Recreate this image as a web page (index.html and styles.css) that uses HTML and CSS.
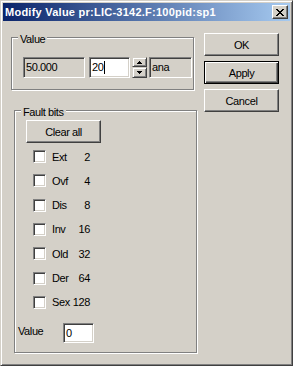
FILE: index.html
```html
<!DOCTYPE html>
<html lang="en">
<head>
    <meta charset="UTF-8">
    <title>Modify Value</title>
    <link rel="stylesheet" href="styles.css">
</head>
<body>
    <div class="window">
        <div class="titlebar">
            <span class="title">Modify Value pr:LIC-3142.F:100pid:sp1</span>
            <span class="close">
                <svg width="8" height="7" viewBox="0 0 8 7" shape-rendering="crispEdges">
                    <path d="M0 0h2v1h-2z M6 0h2v1h-2z M1 1h2v1h-2z M5 1h2v1h-2z M2 2h4v1h-4z M3 3h2v1h-2z M2 4h4v1h-4z M1 5h2v1h-2z M5 5h2v1h-2z M0 6h2v1h-2z M6 6h2v1h-2z" fill="#000"/>
                </svg>
            </span>
        </div>

        <div class="client">
            <div class="left">
                <div class="group value-group">
                    <span class="legend">Value</span>
                    <div class="field-row">
                        <div class="field readonly current">50.000</div>
                        <div class="field edit entry">20<span class="caret"></span></div>
                        <div class="spin">
                            <span class="spin-btn">
                                <svg width="5" height="3" viewBox="0 0 5 3" shape-rendering="crispEdges"><path d="M2 0h1v1h1v1h1v1h-5v-1h1v-1h1z" fill="#000"/></svg>
                            </span>
                            <span class="spin-btn down">
                                <svg width="5" height="3" viewBox="0 0 5 3" shape-rendering="crispEdges"><path d="M0 0h5v1h-1v1h-1v1h-1v-1h-1v-1h-1z" fill="#000"/></svg>
                            </span>
                        </div>
                        <div class="field readonly unit">ana</div>
                    </div>
                </div>

                <div class="group fault-group">
                    <span class="legend">Fault bits</span>
                    <button class="btn clear">Clear all</button>
                    <ul class="bits">
                        <li><span class="check"></span><span class="bit-label"><span>Ext</span><span>2</span></span></li>
                        <li><span class="check"></span><span class="bit-label"><span>Ovf</span><span>4</span></span></li>
                        <li><span class="check"></span><span class="bit-label"><span>Dis</span><span>8</span></span></li>
                        <li><span class="check"></span><span class="bit-label"><span>Inv</span><span>16</span></span></li>
                        <li><span class="check"></span><span class="bit-label"><span>Old</span><span>32</span></span></li>
                        <li><span class="check"></span><span class="bit-label"><span>Der</span><span>64</span></span></li>
                        <li><span class="check"></span><span class="bit-label"><span>Sex</span><span>128</span></span></li>
                    </ul>
                    <div class="value-row">
                        <span class="value-label">Value</span>
                        <div class="field edit bits-value">0</div>
                    </div>
                </div>
            </div>

            <div class="buttons">
                <button class="btn">OK</button>
                <button class="btn default">Apply</button>
                <button class="btn">Cancel</button>
            </div>
        </div>
    </div>
</body>
</html>
```

FILE: styles.css
```css
* {
    box-sizing: border-box;
}

body {
    margin: 0;
    font-family: "Liberation Sans", Arial, sans-serif;
    font-size: 11px;
    letter-spacing: -0.4px;
    color: #000;
    background: #d4d0c8;
}

.window {
    width: 293px;
    height: 366px;
    background: #d4d0c8;
    border: 1px solid;
    border-color: #d4d0c8 #404040 #404040 #d4d0c8;
    box-shadow: inset 1px 1px #fff, inset -1px -1px #808080;
    padding: 2px;
}

/* Title bar */
.titlebar {
    height: 18px;
    background: linear-gradient(to right, #0a246a, #a6caf0);
    display: flex;
    align-items: center;
    justify-content: space-between;
    padding: 0 2px;
}

.title {
    color: #fff;
    font-weight: bold;
    letter-spacing: 0.25px;
}

.close {
    width: 16px;
    height: 14px;
    background: #d4d0c8;
    border: 1px solid;
    border-color: #fff #404040 #404040 #fff;
    box-shadow: inset -1px -1px #808080;
    display: flex;
    align-items: center;
    justify-content: center;
}

/* Client area */
.client {
    display: flex;
}

.left {
    width: 194px;
}

.group {
    position: relative;
    border: 1px solid #808080;
    box-shadow: inset 1px 1px #fff, 1px 1px #fff;
}

.legend {
    position: absolute;
    top: -5px;
    left: 6px;
    padding: 0 2px;
    line-height: 13px;
    background: #d4d0c8;
}

.value-group {
    margin: 16px 0 0 8px;
    width: 183px;
    height: 53px;
    padding: 19px 0 0 11px;
}

.field-row {
    display: flex;
}

.field {
    height: 21px;
    border: 1px solid;
    border-color: #808080 #fff #fff #808080;
    box-shadow: inset 1px 1px #404040, inset -1px -1px #d4d0c8;
    padding: 0 2px;
    line-height: 19px;
}

.readonly {
    background: #d4d0c8;
}

.edit {
    background: #fff;
}

.current {
    width: 62px;
}

.entry {
    width: 41px;
    margin-left: 4px;
    display: flex;
    align-items: center;
}

.caret {
    display: inline-block;
    width: 1px;
    height: 13px;
    margin-left: 1px;
    background: #000;
}

.spin {
    width: 15px;
    height: 21px;
    margin-left: 2px;
    display: flex;
    flex-direction: column;
}

.spin-btn {
    height: 10px;
    background: #d4d0c8;
    border: 1px solid;
    border-color: #d4d0c8 #404040 #404040 #d4d0c8;
    box-shadow: inset 1px 1px #fff, inset -1px -1px #808080;
    display: flex;
    align-items: center;
    justify-content: center;
}

.spin-btn.down {
    height: 11px;
}

.unit {
    width: 43px;
    margin-left: 2px;
}

/* Fault bits */
.fault-group {
    margin: 20px 0 0 11px;
    width: 183px;
    height: 243px;
    padding: 9px 0 0 11px;
}

.btn {
    display: block;
    width: 75px;
    height: 23px;
    padding: 0;
    background: #d4d0c8;
    border: 1px solid;
    border-color: #fff #404040 #404040 #fff;
    box-shadow: inset -1px -1px #808080;
    font: inherit;
    letter-spacing: inherit;
    color: #000;
}

.btn.default {
    border-color: #000;
    box-shadow: inset 1px 1px #fff, inset -1px -1px #404040, inset -2px -2px #808080;
}

.bits {
    list-style: none;
    margin: 7px 0 0;
    padding: 0 0 0 7px;
}

.bits li {
    display: flex;
    align-items: center;
    height: 13px;
    margin-bottom: 11.33px;
}

.bits li:last-child {
    margin-bottom: 0;
}

.check {
    width: 13px;
    height: 13px;
    border: 1px solid;
    border-color: #808080 #fff #fff #808080;
    box-shadow: inset 1px 1px #404040, inset -1px -1px #d4d0c8;
    background: #fff;
}

.bit-label {
    width: 38px;
    margin-left: 6px;
    display: flex;
    justify-content: space-between;
}

.value-row {
    display: flex;
    align-items: center;
    margin: 14px 0 0 -8px;
}

.value-label {
    width: 45px;
    margin-bottom: 3px;
}

.bits-value {
    width: 31px;
    height: 20px;
    line-height: 18px;
}

/* Dialog buttons */
.buttons {
    margin: 12px 0 0 7px;
    display: flex;
    flex-direction: column;
    gap: 5px;
}
```
